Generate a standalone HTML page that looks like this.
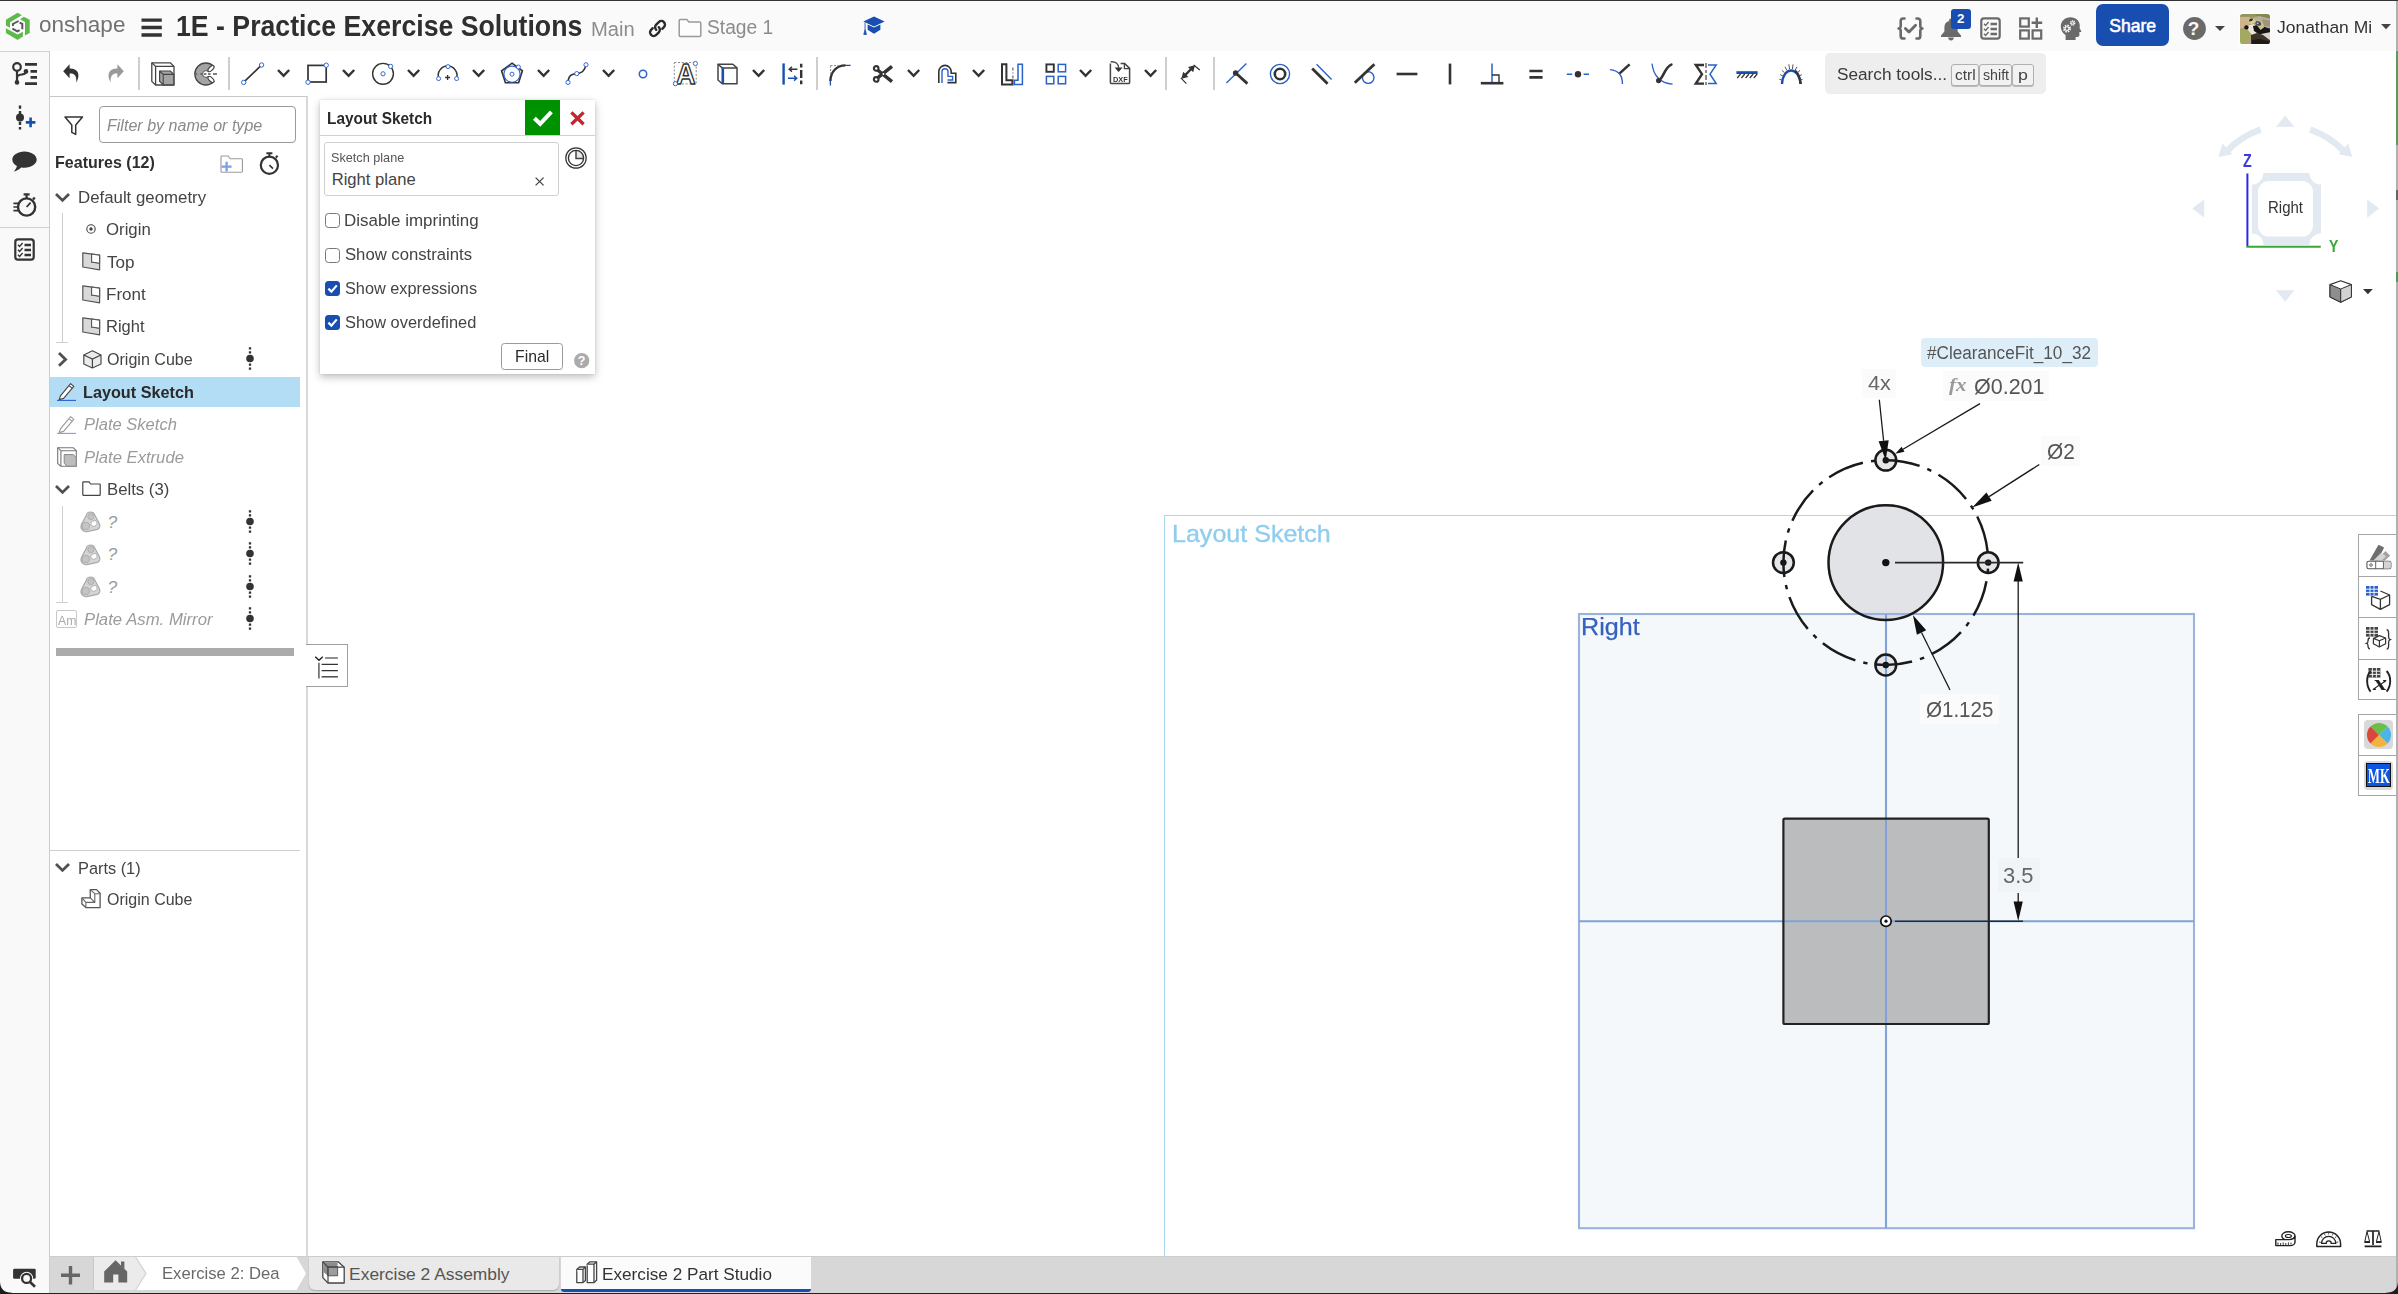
<!DOCTYPE html>
<html lang="en"><head><meta charset="utf-8"><title>1E - Practice Exercise Solutions | Exercise 2 Part Studio</title>
<style>
html,body{margin:0;padding:0;}
body{width:2398px;height:1294px;position:relative;overflow:hidden;background:#fff;font-family:"Liberation Sans",sans-serif;color:#333;}
.b{position:absolute;box-sizing:border-box;}
.t{position:absolute;white-space:nowrap;transform-origin:0 50%;}
svg{overflow:visible;}
</style></head><body>
<div class="b" style="left:0px;top:0px;width:2398px;height:51px;background:#fafafa;"></div>
<div class="b" style="left:0px;top:0px;width:2398px;height:1.2px;background:#333;"></div>
<div class="b" style="left:0px;top:51px;width:50px;height:1243px;background:#f9f9f9;border-right:1px solid #ccc;border-top:1px solid #d0d0d0;"></div>
<div class="b" style="left:50px;top:96px;width:258px;height:1161px;background:#fff;border-top:1px solid #c8c8c8;border-right:2px solid #d8d8d8;"></div>
<div class="b" style="left:50px;top:1256px;width:2348px;height:38px;background:#d7d7d7;"></div>
<div class="b" style="left:2396.4px;top:1px;width:1.6px;height:1293px;background:#b0b0b0;"></div>
<div class="b" style="left:2396.4px;top:51px;width:1.6px;height:94px;background:#5a9c5a;"></div>
<div class="b" style="left:2396.4px;top:190px;width:1.6px;height:10px;background:#666;"></div>
<div class="b" style="left:2396.4px;top:272px;width:1.6px;height:10px;background:#4aa04a;"></div>
<div class="b" style="left:0px;top:1292.6px;width:2398px;height:1.4px;background:#222;"></div>
<svg class="b" style="left:0px;top:1282px;" width="12" height="12" viewBox="0 0 12 12"><path d="M0,0 V12 H12 V10.8 C4,10.8 0.6,7 0,0z" fill="#1c1c1c"/></svg>
<svg class="b" style="left:2386px;top:1282px;" width="12" height="12" viewBox="0 0 12 12"><path d="M12,0 V12 H0 V10.8 C8,10.8 11.4,7 12,0z" fill="#1c1c1c"/></svg>
<svg class="b" style="left:0px;top:0px;" width="50" height="50" viewBox="0 0 50 50">
<path d="M5.9,19.7 L17.6,12.8 L21.9,15.3 L10,22.3 V27.7 L5.9,25.5z" fill="#5dba4a"/>
<path d="M20,19.3 L23.8,16.8 L29.7,19.7 V33 L25,35.4 V22.1z" fill="#5dba4a"/>
<path d="M5.9,28.3 L17.6,34.6 L22.9,31.7 V36.4 L17.6,39.9 L5.9,33z" fill="#5dba4a"/>
<g fill="none" stroke="#555" stroke-width="1.9"><path d="M18.6,21 L12.9,24 V26"/><path d="M19.6,22.6 L22.3,23.8 V29.2"/><path d="M12.4,28.6 L17.4,31.4 L19.6,30.2"/></g>
</svg>
<span class="t" style="left:38.6px;top:12px;font-size:22.2px;line-height:25px;color:#707070;transform:scaleX(1.0150);">onshape</span>
<svg class="b" style="left:141px;top:16px;" width="22" height="22" viewBox="0 0 22 22"><path d="M0.5,4.1 h20.3 M0.5,11.5 h20.3 M0.5,19 h20.3" stroke="#333" stroke-width="3.4"/></svg>
<span class="t" style="left:175.9px;top:10px;font-size:28.7px;line-height:32px;color:#2f2f2f;font-weight:700;transform:scaleX(0.9299);">1E - Practice Exercise Solutions</span>
<span class="t" style="left:591.4px;top:18px;font-size:19.6px;line-height:22px;color:#8c8c8c;transform:scaleX(1.0305);">Main</span>
<svg class="b" style="left:648px;top:19px;" width="19" height="19" viewBox="0 0 19 19"><g fill="none" stroke="#2b2b2b" stroke-width="2.4" stroke-linecap="round">
<path d="M8.2,10.8 a3.6,3.6 0 0 1 0,-5.1 l2.6,-2.6 a3.6,3.6 0 0 1 5.1,5.1 l-1.6,1.6"/>
<path d="M10.8,8.2 a3.6,3.6 0 0 1 0,5.1 l-2.6,2.6 a3.6,3.6 0 0 1 -5.1,-5.1 l1.6,-1.6"/></g></svg>
<svg class="b" style="left:678px;top:18px;" width="24" height="19" viewBox="0 0 24 19"><path d="M1.2,17.2 V2.6 a1.2,1.2 0 0 1 1.2,-1.2 h6.4 l2,2.6 h10.8 a1.2,1.2 0 0 1 1.2,1.2 v12 a1.2,1.2 0 0 1 -1.2,1.2 h-19.2 a1.2,1.2 0 0 1 -1.2,-1.2z" fill="#fdfdfd" stroke="#9a9a9a" stroke-width="1.5"/></svg>
<span class="t" style="left:706.6px;top:16px;font-size:19.6px;line-height:22px;color:#8c8c8c;transform:scaleX(0.9809);">Stage 1</span>
<svg class="b" style="left:863px;top:16px;" width="22" height="20" viewBox="0 0 22 20"><path d="M11,0.6 L21.6,5.6 L11,10.6 L0.4,5.6z" fill="#174eb0"/>
<path d="M4.6,8.6 v5.2 l6.4,4 l6.4,-4 v-5.2 l-6.4,3z" fill="#174eb0"/>
<path d="M2,6.5 v7 l-1.2,5 h2.6 l-1.2,-5" fill="#174eb0" stroke="#174eb0" stroke-width="0.8"/></svg>
<svg class="b" style="left:1897px;top:17px;" width="27" height="24" viewBox="0 0 27 24"><g fill="none" stroke="#6a6a6a" stroke-width="2.6" stroke-linecap="round" stroke-linejoin="round">
<path d="M7.5,1.5 h-1.2 a2.6,2.6 0 0 0 -2.6,2.6 v4.6 a2.4,2.4 0 0 1 -2.2,2.8 a2.4,2.4 0 0 1 2.2,2.8 v4.6 a2.6,2.6 0 0 0 2.6,2.6 h1.2"/>
<path d="M19.5,1.5 h1.2 a2.6,2.6 0 0 1 2.6,2.6 v4.6 a2.4,2.4 0 0 0 2.2,2.8 a2.4,2.4 0 0 0 -2.2,2.8 v4.6 a2.6,2.6 0 0 1 -2.6,2.6 h-1.2"/>
<path d="M8.4,11.4 l3.6,3.6 l6.6,-6.8" stroke-width="2.8"/></g></svg>
<svg class="b" style="left:1940px;top:18px;" width="22" height="22" viewBox="0 0 22 22"><path d="M11,0.5 a2,2 0 0 1 2,2 v0.6 a6.6,6.6 0 0 1 4.6,6.4 v4 l3.4,4 v1.4 h-20 v-1.4 l3.4,-4 v-4 a6.6,6.6 0 0 1 4.6,-6.4 v-0.6 a2,2 0 0 1 2,-2z M8.2,19.6 h5.6 a2.8,2.8 0 0 1 -5.6,0z" fill="#6a6a6a"/></svg>
<div class="b" style="left:1951px;top:9px;width:20px;height:20px;background:#174eb0;border-radius:3px;"></div>
<span class="t" style="left:1957.1px;top:11px;font-size:13.4px;line-height:15px;color:#fff;font-weight:700;">2</span>
<svg class="b" style="left:1980px;top:17px;" width="21" height="23" viewBox="0 0 21 23"><rect x="1.3" y="1.3" width="18.4" height="20.4" rx="2.6" fill="none" stroke="#6a6a6a" stroke-width="2.2"/>
<g stroke="#6a6a6a" stroke-width="2.4"><path d="M10.5,7 h6.5 M10.5,12 h6.5 M10.5,17 h6.5"/></g>
<g stroke="#6a6a6a" stroke-width="1.4" fill="none"><path d="M4,6.8 l1.6,1.6 l3,-3.4 M4,11.8 l1.6,1.6 l3,-3.4 M4,16.8 l1.6,1.6 l3,-3.4"/></g></svg>
<svg class="b" style="left:2019px;top:17px;" width="24" height="23" viewBox="0 0 24 23"><g fill="none" stroke="#6a6a6a" stroke-width="2.2"><rect x="1.2" y="1.4" width="8.6" height="8.2"/><rect x="1.2" y="13.4" width="8.6" height="8.2"/><rect x="13.6" y="13.4" width="8.6" height="8.2"/></g>
<path d="M17.8,0.4 v10.6 M12.6,5.7 h10.6" stroke="#6a6a6a" stroke-width="2.4"/></svg>
<svg class="b" style="left:2060px;top:17px;" width="22" height="23" viewBox="0 0 22 23"><path d="M10.4,0.2 c5.6,0 9.4,3.8 9.4,8.6 c0,0.8 -0.1,1.5 -0.3,2.2 l1.7,3 c0.3,0.6 0,1.1 -0.6,1.1 h-1.2 v3 c0,1.2 -0.8,2 -2,2 h-1.8 v2.9 h-10 v-5 c-3,-2 -4.8,-5 -4.8,-8.6 c0,-5.2 4,-9.2 9.6,-9.2z" fill="#6a6a6a"/>
<circle cx="7" cy="11.6" r="3.1" fill="none" stroke="#fafafa" stroke-width="1.8" stroke-dasharray="1.5 0.93"/><circle cx="7" cy="11.6" r="1.9" fill="none" stroke="#fafafa" stroke-width="1.1"/>
<circle cx="12.6" cy="6" r="2" fill="none" stroke="#fafafa" stroke-width="1.5" stroke-dasharray="1.1 0.47"/><circle cx="12.6" cy="6" r="1.1" fill="none" stroke="#fafafa" stroke-width="0.8"/></svg>
<div class="b" style="left:2096px;top:4px;width:73px;height:42px;background:#174eb0;border-radius:7px;"></div>
<span class="t" style="left:2109.2px;top:16px;font-size:17.6px;line-height:20px;color:#fff;-webkit-text-stroke:0.55px #fff;">Share</span>
<svg class="b" style="left:2183px;top:17px;" width="23" height="23" viewBox="0 0 23 23"><circle cx="11.5" cy="11.5" r="11.4" fill="#6a6a6a"/></svg>
<span class="t" style="left:2187.7px;top:18px;font-size:19px;line-height:21px;color:#fafafa;font-weight:700;">?</span>
<svg class="b" style="left:2215px;top:26px;" width="10" height="5" viewBox="0 0 10 5"><path d="M0,0 h10 l-5,5z" fill="#444"/></svg>
<div class="b" style="left:2239px;top:13px;width:32px;height:32px;background:#fff;border-radius:4px;"></div>
<svg class="b" style="left:2240px;top:14px;" width="30" height="30" viewBox="0 0 30 30"><defs><clipPath id="av"><rect width="30" height="30" rx="2.6"/></clipPath><filter id="avb" x="-10%" y="-10%" width="120%" height="120%"><feGaussianBlur stdDeviation="0.5"/></filter></defs>
<g clip-path="url(#av)"><g filter="url(#avb)"><rect x="-2" y="-2" width="34" height="34" fill="#a39c6c"/>
<rect x="-2" y="-2" width="34" height="4.4" fill="#8f965a"/><path d="M14,0 h17 v5 l-12,-2z" fill="#7d8a4c"/>
<path d="M0,3 h10 l-1,9 l-9,3z" fill="#cdb48e"/>
<path d="M-1,16 l9,-1 l4,6 l-1,10 h-12z" fill="#a2aa62"/>
<path d="M8,25 h4 v6 h-5z" fill="#b89a7c"/>
<path d="M13,4 l6,-2 l12,3 v9 l-14,-1z" fill="#b9ae9c"/>
<path d="M22,5 l9,2 v6 l-7,-1z" fill="#9e937f"/>
<path d="M9,11 l5,-1 l3,4 l-1,6 l-4,1 l-4,-5z" fill="#ebe5da"/>
<path d="M13,12 l5,-1 l13,4 v6 l-12,-1 l-5,-3z" fill="#141414"/>
<path d="M21,20 l10,-2 v9 l-8,0z" fill="#d9d3ca"/>
<path d="M11,21 l6,-2 l6,2 l8,6 v5 h-20z" fill="#3b322c"/>
<path d="M12,26 l8,-1 l11,3 v4 h-19z" fill="#1b1a19"/>
<path d="M8.5,6.5 l3,-2.2 l3.4,1.2 l0.6,3 l-4,1.8 l-2.6,-1z" fill="#d9cd98"/>
<path d="M14.5,7 l4,-1 l4.5,3 l1,4.5 l-3.5,2.5 l-3,-4z" fill="#d3c07e"/>
<ellipse cx="11" cy="6" rx="2.1" ry="1.2" transform="rotate(-25 11 6)" fill="#2c2b32"/>
<ellipse cx="18.3" cy="9.4" rx="3" ry="2" transform="rotate(25 18.3 9.4)" fill="#3f4a5c"/>
<ellipse cx="17.6" cy="9.2" rx="1" ry="0.7" fill="#c9d3de"/>
<circle cx="6.4" cy="13.4" r="2.1" fill="#121212"/>
</g></g></svg>
<span class="t" style="left:2277.3px;top:17px;font-size:17.2px;line-height:20px;color:#333;transform:scaleX(1.0154);">Jonathan Mi</span>
<svg class="b" style="left:2380.7px;top:23.8px;" width="10" height="5.2" viewBox="0 0 10 5.2"><path d="M0,0 h10 l-5,5.2z" fill="#444"/></svg>
<svg class="b" style="left:12px;top:62px;" width="26" height="23" viewBox="0 0 26 23"><g stroke="#333" stroke-width="2.6" fill="none"><path d="M13,2.4 h12 M18.5,9.4 h6.5 M18.5,15.4 h6.5 M13,21.6 h12"/></g>
<circle cx="5" cy="5" r="3.8" fill="none" stroke="#333" stroke-width="2.2"/>
<path d="M5,9 V20 M5,15.5 c0,-2 2,-2.5 5,-3 c2.5,-0.4 4,-1.5 4,-3" fill="none" stroke="#333" stroke-width="2.2"/>
<circle cx="5" cy="20.4" r="2.3" fill="#333"/><circle cx="14" cy="9.4" r="2.3" fill="#333"/></svg>
<svg class="b" style="left:62.5px;top:63.5px;" width="17" height="19" viewBox="0 0 17 19"><path d="M6.6,0.2 L0.2,7.2 L6.6,14.2 V9.6 C11.5,9.2 13.6,11.6 13.4,18.6 C17.4,11 15.8,4.4 6.6,4.6z" fill="#333"/></svg>
<svg class="b" style="left:107px;top:63.5px;" width="17" height="19" viewBox="0 0 17 19"><path d="M10.4,0.2 L16.8,7.2 L10.4,14.2 V9.6 C5.5,9.2 3.4,11.6 3.6,18.6 C-0.4,11 1.2,4.4 10.4,4.6z" fill="#9a9a9a"/></svg>
<div class="b" style="left:138px;top:57px;width:2px;height:33px;background:#cfcfcf;"></div>
<svg class="b" style="left:150.5px;top:61.5px;" width="24" height="24" viewBox="0 0 24 24"><g fill="none" stroke="#444" stroke-width="1.3" stroke-linejoin="round"><path d="M0.8,0.8 h18.4 l3.8,3.6 v18.6 h-18.4 l-3.8,-3.6z"/><path d="M0.8,0.8 l3.8,3.6 h18.4 M4.6,4.4 v18.6"/></g>
<path d="M8.6,9 h10.6 l3.6,3.4 v10.4 h-10.6 l-3.6,-3.4z" fill="#a4a4a4" stroke="#444" stroke-width="1.2" stroke-linejoin="round"/><path d="M8.6,9 l3.6,3.4 h10.6 M12.2,12.4 v10.4" fill="none" stroke="#444" stroke-width="1.1"/></svg>
<svg class="b" style="left:194.0px;top:61.5px;" width="24" height="24" viewBox="0 0 24 24"><path d="M12,12 L19.6,4.2 A11,11 0 1 0 19.6,19.8z" fill="#a4a4a4" stroke="#444" stroke-width="1.3"/>
<path d="M8.6,12 a3.4,3.4 0 0 1 6.8,0 a3.4,3.4 0 0 1 -6.8,0" fill="#fff" stroke="#444" stroke-width="0.9"/><path d="M12,12 L18.6,5.6 L18.6,18.4z" fill="#fff"/>
<ellipse cx="17" cy="6.6" rx="3.8" ry="1.9" transform="rotate(-45 17 6.6)" fill="#fff" stroke="#444" stroke-width="1.2"/>
<ellipse cx="17" cy="17.4" rx="3.8" ry="1.9" transform="rotate(45 17 17.4)" fill="#fff" stroke="#444" stroke-width="1.2"/>
<path d="M2,12 h1.2 M6.4,12 h2 M10,12 h2.4 M14,12 h2.6 M19,12 h4" stroke="#555" stroke-width="1.3"/></svg>
<div class="b" style="left:228px;top:57px;width:2px;height:33px;background:#cfcfcf;"></div>
<svg class="b" style="left:240.5px;top:61.5px;" width="24" height="24" viewBox="0 0 24 24"><path d="M2.8,20.2 L20.4,3.2" stroke="#333" stroke-width="1.7"/><circle cx="2.7" cy="20.4" r="2.2" fill="#fff" stroke="#2a62c9" stroke-width="0.95"/><circle cx="20.6" cy="3" r="2.2" fill="#fff" stroke="#2a62c9" stroke-width="0.95"/></svg>
<svg class="b" style="left:278.4px;top:70.39999999999999px;" width="11.2" height="5.8" viewBox="0 0 11.2 5.8"><path d="M0,0 L5.6,5.8 L11.2,0" fill="none" stroke="#333" stroke-width="2.5"/></svg>
<svg class="b" style="left:305.0px;top:61.5px;" width="24" height="24" viewBox="0 0 24 24"><rect x="3" y="3.4" width="18.2" height="16.6" fill="none" stroke="#333" stroke-width="1.7"/><circle cx="3" cy="20.2" r="2.2" fill="#fff" stroke="#2a62c9" stroke-width="0.95"/><circle cx="21.2" cy="3.2" r="2.2" fill="#fff" stroke="#2a62c9" stroke-width="0.95"/></svg>
<svg class="b" style="left:343.4px;top:70.39999999999999px;" width="11.2" height="5.8" viewBox="0 0 11.2 5.8"><path d="M0,0 L5.6,5.8 L11.2,0" fill="none" stroke="#333" stroke-width="2.5"/></svg>
<svg class="b" style="left:370.5px;top:61.5px;" width="24" height="24" viewBox="0 0 24 24"><circle cx="12" cy="11.8" r="10.4" fill="none" stroke="#333" stroke-width="1.4"/><circle cx="12" cy="11.8" r="2.1" fill="#fff" stroke="#2a62c9" stroke-width="0.95"/><circle cx="19.6" cy="4.4" r="2.1" fill="#fff" stroke="#2a62c9" stroke-width="0.95"/></svg>
<svg class="b" style="left:408.4px;top:70.39999999999999px;" width="11.2" height="5.8" viewBox="0 0 11.2 5.8"><path d="M0,0 L5.6,5.8 L11.2,0" fill="none" stroke="#333" stroke-width="2.5"/></svg>
<svg class="b" style="left:435.5px;top:61.5px;" width="24" height="24" viewBox="0 0 24 24"><path d="M2.6,16.2 A9.4,9.4 0 1 1 20.6,16.2" fill="none" stroke="#333" stroke-width="1.5"/><circle cx="2.6" cy="16.6" r="2" fill="#fff" stroke="#2a62c9" stroke-width="0.95"/><circle cx="20.6" cy="16.6" r="2" fill="#fff" stroke="#2a62c9" stroke-width="0.95"/><circle cx="12" cy="4.6" r="2" fill="#fff" stroke="#2a62c9" stroke-width="0.95"/><path d="M11.6,13 v5 M9.1,15.5 h5" stroke="#333" stroke-width="1.3"/></svg>
<svg class="b" style="left:473.0px;top:70.39999999999999px;" width="11.2" height="5.8" viewBox="0 0 11.2 5.8"><path d="M0,0 L5.6,5.8 L11.2,0" fill="none" stroke="#333" stroke-width="2.5"/></svg>
<svg class="b" style="left:500.4px;top:61.5px;" width="24" height="24" viewBox="0 0 24 24"><path d="M12,1.2 L22.4,8.8 L18.6,20.8 H5.4 L1.6,8.8z" fill="none" stroke="#333" stroke-width="1.6"/><circle cx="12" cy="12.2" r="8.1" fill="none" stroke="#2a62c9" stroke-width="1.1"/><circle cx="12" cy="12.2" r="2" fill="#fff" stroke="#2a62c9" stroke-width="0.95"/><circle cx="18.4" cy="5" r="2" fill="#fff" stroke="#2a62c9" stroke-width="0.95"/></svg>
<svg class="b" style="left:538.4px;top:70.39999999999999px;" width="11.2" height="5.8" viewBox="0 0 11.2 5.8"><path d="M0,0 L5.6,5.8 L11.2,0" fill="none" stroke="#333" stroke-width="2.5"/></svg>
<svg class="b" style="left:565.3px;top:61.5px;" width="24" height="24" viewBox="0 0 24 24"><path d="M3,20.4 C3.4,13 7,12 11.6,11.6 C16,11.2 20,8.8 20.8,3" fill="none" stroke="#333" stroke-width="1.6"/><circle cx="3" cy="20.4" r="2.1" fill="#fff" stroke="#2a62c9" stroke-width="0.95"/><circle cx="11.8" cy="11.6" r="2.1" fill="#fff" stroke="#2a62c9" stroke-width="0.95"/><circle cx="21" cy="2.8" r="2.1" fill="#fff" stroke="#2a62c9" stroke-width="0.95"/></svg>
<svg class="b" style="left:603.4px;top:70.39999999999999px;" width="11.2" height="5.8" viewBox="0 0 11.2 5.8"><path d="M0,0 L5.6,5.8 L11.2,0" fill="none" stroke="#333" stroke-width="2.5"/></svg>
<svg class="b" style="left:630.5px;top:61.5px;" width="24" height="24" viewBox="0 0 24 24"><circle cx="12" cy="12" r="3.7" fill="none" stroke="#2a62c9" stroke-width="1.5"/></svg>
<svg class="b" style="left:670px;top:58px;" width="32" height="32" viewBox="0 0 32 32"><rect x="4.3" y="4.5" width="21.9" height="21.4" fill="none" stroke="#8a8a8a" stroke-width="1" stroke-dasharray="2 1.7"/><text x="15.7" y="25.6" text-anchor="middle" font-family="Liberation Sans, sans-serif" font-weight="700" font-size="28.6" fill="#fff" stroke="#333" stroke-width="1.4" stroke-linejoin="round" textLength="19.6" lengthAdjust="spacingAndGlyphs">A</text><circle cx="25.4" cy="5.5" r="2.1" fill="#fff" stroke="#2a62c9" stroke-width="0.95"/><circle cx="5.4" cy="25.7" r="2.1" fill="#fff" stroke="#2a62c9" stroke-width="0.95"/></svg>
<svg class="b" style="left:715.5px;top:61.5px;" width="24" height="24" viewBox="0 0 24 24"><g fill="none" stroke="#444" stroke-width="1.5" stroke-linejoin="round"><path d="M2,2.2 h14.8 l4.2,3.7 v15.8 h-14.8 l-4.2,-3.7z"/><path d="M2,2.2 l4.2,3.7 h14.8"/></g><path d="M6.8,5.9 v15.8" stroke="#174eb0" stroke-width="2.6"/></svg>
<svg class="b" style="left:753.4px;top:70.39999999999999px;" width="11.2" height="5.8" viewBox="0 0 11.2 5.8"><path d="M0,0 L5.6,5.8 L11.2,0" fill="none" stroke="#333" stroke-width="2.5"/></svg>
<svg class="b" style="left:780.0px;top:61.5px;" width="24" height="24" viewBox="0 0 24 24"><path d="M3.6,1.4 v21.2" stroke="#174eb0" stroke-width="2.4"/><path d="M21.2,1.8 v20.6" stroke="#333" stroke-width="2.4" stroke-dasharray="3.6 2.6 8 2.6 3.6"/>
<path d="M17.4,7.2 h-8 m2.6,-2.4 l-2.8,2.4 l2.8,2.4" fill="none" stroke="#333" stroke-width="1.4"/><path d="M8,16.2 h8.6 m-2.6,-2.4 l2.8,2.4 l-2.8,2.4" fill="none" stroke="#174eb0" stroke-width="1.4"/></svg>
<div class="b" style="left:815.5px;top:57px;width:2px;height:33px;background:#cfcfcf;"></div>
<svg class="b" style="left:828.3px;top:61.5px;" width="24" height="24" viewBox="0 0 24 24"><path d="M2.6,3.6 h8 M2.6,3.6 v8" stroke="#888" stroke-width="1" stroke-dasharray="2 1.4" fill="none"/><path d="M2.4,19 C2.6,9.6 8.6,3.6 17.4,3.4" fill="none" stroke="#333" stroke-width="2.4"/><path d="M17,3.4 h5.6 M2.4,18.6 v4.8" stroke="#174eb0" stroke-width="1.3"/></svg>
<svg class="b" style="left:870.6px;top:61.5px;" width="24" height="24" viewBox="0 0 24 24"><g fill="none" stroke="#333" stroke-width="2.1"><circle cx="5.2" cy="6.4" r="2.3"/><circle cx="5.2" cy="17.4" r="2.3"/></g><path d="M6.6,8 L21,19.6 M6.6,15.8 L21,4.4" stroke="#333" stroke-width="3.5" stroke-linecap="butt"/><circle cx="12.4" cy="12" r="0.9" fill="#fff"/></svg>
<svg class="b" style="left:908.3px;top:70.39999999999999px;" width="11.2" height="5.8" viewBox="0 0 11.2 5.8"><path d="M0,0 L5.6,5.8 L11.2,0" fill="none" stroke="#333" stroke-width="2.5"/></svg>
<svg class="b" style="left:935.3px;top:61.5px;" width="24" height="24" viewBox="0 0 24 24"><path d="M3.8,21 V9.6 a6.2,6.2 0 0 1 12.4,0 v1.6 h4.6 v9.4 h-8.4" fill="none" stroke="#333" stroke-width="1.6"/><path d="M7,21 V9.8 a3,3 0 0 1 6,0 v4.6 h4.6 v3.6 h-5" fill="none" stroke="#2a62c9" stroke-width="1.4"/></svg>
<svg class="b" style="left:973.1999999999999px;top:70.39999999999999px;" width="11.2" height="5.8" viewBox="0 0 11.2 5.8"><path d="M0,0 L5.6,5.8 L11.2,0" fill="none" stroke="#333" stroke-width="2.5"/></svg>
<svg class="b" style="left:1000.4px;top:61.5px;" width="24" height="24" viewBox="0 0 24 24"><path d="M2,2.2 h4.4 v16 h6 v4.2 h-10.4z" fill="none" stroke="#333" stroke-width="2"/><path d="M22.4,2.2 h-4.4 v16 h-3.6 v4.2 h8z" fill="none" stroke="#2a62c9" stroke-width="1.5"/><path d="M12.9,5.6 v17.6" stroke="#555" stroke-width="1.1" stroke-dasharray="3 2 1 2"/></svg>
<svg class="b" style="left:1043.6px;top:61.5px;" width="24" height="24" viewBox="0 0 24 24"><rect x="2.4" y="2.4" width="7.4" height="7.4" fill="none" stroke="#333" stroke-width="1.9"/><g fill="none" stroke="#2a62c9" stroke-width="1.5"><rect x="14.2" y="2.4" width="7.4" height="7.4"/><rect x="2.4" y="14.4" width="7.4" height="7.4"/><rect x="14.2" y="14.4" width="7.4" height="7.4"/></g></svg>
<svg class="b" style="left:1080.2px;top:70.39999999999999px;" width="11.2" height="5.8" viewBox="0 0 11.2 5.8"><path d="M0,0 L5.6,5.8 L11.2,0" fill="none" stroke="#333" stroke-width="2.5"/></svg>
<svg class="b" style="left:1108.3px;top:60.2px;" width="24" height="24" viewBox="0 0 24 24"><path d="M2.4,3.6 V22.6 a0.8,0.8 0 0 0 0.8,0.8 h17.6 a0.8,0.8 0 0 0 0.8,-0.8 V8.4 l-5,-5 h-4" fill="none" stroke="#444" stroke-width="1.5"/><path d="M16.4,3.4 v5.2 h5.2" fill="none" stroke="#444" stroke-width="1.3"/>
<path d="M2.6,1.8 c5.4,-0.4 8,2 8,6" fill="none" stroke="#444" stroke-width="1.3"/><path d="M6.6,7.6 h8 l-4,4.4z" fill="#333"/></svg>
<span class="t" style="left:1113.1px;top:75px;font-size:7.4px;line-height:9px;color:#333;font-weight:700;transform:scaleX(0.9957);">DXF</span>
<svg class="b" style="left:1145.3000000000002px;top:70.39999999999999px;" width="11.2" height="5.8" viewBox="0 0 11.2 5.8"><path d="M0,0 L5.6,5.8 L11.2,0" fill="none" stroke="#333" stroke-width="2.5"/></svg>
<div class="b" style="left:1165.3px;top:57px;width:2px;height:33px;background:#cfcfcf;"></div>
<svg class="b" style="left:1178.3px;top:61.5px;" width="24" height="24" viewBox="0 0 24 24"><path d="M6.6,13.6 L13.8,6.4" stroke="#333" stroke-width="2.2"/><path d="M3.4,16.8 l1.8,-7 l5.2,5.2z M17,3.2 l-1.8,7 l-5.2,-5.2z" fill="#333"/><path d="M15.7,3 L21.8,8 M2.8,15.8 L8.4,21.6" stroke="#333" stroke-width="1.2"/></svg>
<div class="b" style="left:1213px;top:57px;width:2px;height:33px;background:#cfcfcf;"></div>
<svg class="b" style="left:1225.0px;top:61.5px;" width="24" height="24" viewBox="0 0 24 24"><path d="M1.4,21 L21.4,1.4" stroke="#2a62c9" stroke-width="1.4"/><path d="M11,11.2 L22.4,21.6" stroke="#333" stroke-width="2.8"/><circle cx="10.6" cy="11" r="2.7" fill="#333"/></svg>
<svg class="b" style="left:1268.3px;top:61.5px;" width="24" height="24" viewBox="0 0 24 24"><circle cx="12" cy="12" r="9.6" fill="none" stroke="#2a62c9" stroke-width="1.4"/><circle cx="12" cy="12" r="5.2" fill="none" stroke="#333" stroke-width="2.6"/></svg>
<svg class="b" style="left:1310.0px;top:61.5px;" width="24" height="24" viewBox="0 0 24 24"><path d="M6.6,2.2 L21.6,17.6" stroke="#2a62c9" stroke-width="1.4"/><path d="M2.2,6.6 L17.6,21.8" stroke="#333" stroke-width="2.8"/></svg>
<svg class="b" style="left:1353.0px;top:61.5px;" width="24" height="24" viewBox="0 0 24 24"><circle cx="15.2" cy="15.6" r="5.8" fill="none" stroke="#2a62c9" stroke-width="1.4"/><path d="M1.8,20.8 L21.4,2.2" stroke="#333" stroke-width="2.8"/></svg>
<svg class="b" style="left:1395.4px;top:61.5px;" width="24" height="24" viewBox="0 0 24 24"><path d="M1.6,12 h20.8" stroke="#333" stroke-width="2.6"/></svg>
<svg class="b" style="left:1438.0px;top:61.5px;" width="24" height="24" viewBox="0 0 24 24"><path d="M12,1.6 v20.8" stroke="#333" stroke-width="2.6"/></svg>
<svg class="b" style="left:1480.0px;top:61.5px;" width="24" height="24" viewBox="0 0 24 24"><path d="M12,1.6 v19" stroke="#2a62c9" stroke-width="1.5"/><path d="M12,13 h7 v7.6" fill="none" stroke="#333" stroke-width="1.4"/><path d="M0.8,21.2 h22.6" stroke="#333" stroke-width="2.6"/></svg>
<svg class="b" style="left:1523.5px;top:61.5px;" width="24" height="24" viewBox="0 0 24 24"><path d="M5.4,9 h13.2 M5.4,15.4 h13.2" stroke="#333" stroke-width="2.6"/></svg>
<svg class="b" style="left:1565.6px;top:61.5px;" width="24" height="24" viewBox="0 0 24 24"><path d="M0.8,12.2 h5.4 M17.6,12.2 h5.4" stroke="#2a62c9" stroke-width="1.5"/><circle cx="12" cy="12.2" r="3.2" fill="#333"/></svg>
<svg class="b" style="left:1608.3px;top:61.5px;" width="24" height="24" viewBox="0 0 24 24"><path d="M2,7.6 C10,8.4 14.6,13.4 14.4,22" fill="none" stroke="#2a62c9" stroke-width="1.4"/><path d="M11.6,11.4 L21.6,2.4" stroke="#333" stroke-width="2.6"/></svg>
<svg class="b" style="left:1650.3px;top:61.5px;" width="24" height="24" viewBox="0 0 24 24"><path d="M2,1.6 C3.4,13 10,21 22.6,22.2" fill="none" stroke="#2a62c9" stroke-width="1.3"/><path d="M8.8,18.4 C13.4,16.4 14.4,5.4 21.4,2.6" fill="none" stroke="#333" stroke-width="2.6" stroke-linecap="round"/><circle cx="8.6" cy="18.6" r="2.6" fill="#333"/></svg>
<svg class="b" style="left:1693.5px;top:61.5px;" width="24" height="24" viewBox="0 0 24 24"><path d="M10,3 H1.8 L8,12.2 L1.8,21.6 H10" fill="none" stroke="#333" stroke-width="2.4"/><path d="M14,3 H22.2 L16,12.2 L22.2,21.6 H14" fill="none" stroke="#2a62c9" stroke-width="1.5"/><path d="M12,1 v22.4" stroke="#444" stroke-width="1.2" stroke-dasharray="5 2 3 2"/></svg>
<svg class="b" style="left:1735.3px;top:61.5px;" width="24" height="24" viewBox="0 0 24 24"><path d="M1.4,10.6 h21.2" stroke="#174eb0" stroke-width="2.8"/><path d="M5.6,12 l-3.4,4 M9.8,12 l-3.4,4 M14,12 l-3.4,4 M18.2,12 l-3.4,4 M22.2,12 l-3.4,4" stroke="#333" stroke-width="1.2"/></svg>
<svg class="b" style="left:1778.5px;top:61.5px;" width="24" height="24" viewBox="0 0 24 24"><path d="M3,22 C4,4 20,4 21.6,22" fill="none" stroke="#174eb0" stroke-width="2.4"/><path d="M21.6,22 C21,15 19,11 16,8.6" fill="none" stroke="#333" stroke-width="2.4"/><g stroke="#555" stroke-width="1"><path d="M2.8,18 l-2.4,-0.6 M3.8,14 l-2.6,-1.4 M5.4,10.6 l-2.4,-2.2 M7.8,8.2 l-1.8,-3.4 M10.6,7 l-0.8,-4.6 M13.4,7 l0.6,-4.6 M16.2,8.2 l1.8,-3.4 M18.6,10.6 l2.4,-2.2 M20.2,14 l2.6,-1.4 M21.2,18 l2.4,-0.6"/></g></svg>
<div class="b" style="left:1825px;top:53px;width:221px;height:41px;background:#eeeeee;border-radius:5px;"></div>
<span class="t" style="left:1837.2px;top:64px;font-size:17.4px;line-height:20px;color:#3a3a3a;transform:scaleX(0.9896);">Search tools...</span>
<div class="b" style="left:1951px;top:64.4px;width:27.799999999999955px;height:21.8px;background:#f2f2f2;border:1px solid #b0b0b0;border-radius:3px;box-shadow:0 1px 0 #bbb;"></div>
<span class="t" style="left:1954.9px;top:66px;font-size:15.4px;line-height:17px;color:#444;transform:scaleX(1.0072);">ctrl</span>
<div class="b" style="left:1979.2px;top:64.4px;width:32.59999999999991px;height:21.8px;background:#f2f2f2;border:1px solid #b0b0b0;border-radius:3px;box-shadow:0 1px 0 #bbb;"></div>
<span class="t" style="left:1982.6px;top:66px;font-size:15.4px;line-height:17px;color:#444;transform:scaleX(0.9225);">shift</span>
<div class="b" style="left:2012.2px;top:64.4px;width:21.799999999999955px;height:21.8px;background:#f2f2f2;border:1px solid #b0b0b0;border-radius:3px;box-shadow:0 1px 0 #bbb;"></div>
<span class="t" style="left:2018.3px;top:66px;font-size:15.4px;line-height:17px;color:#444;transform:scaleX(1.1544);">p</span>
<svg class="b" style="left:15px;top:105px;" width="22" height="25" viewBox="0 0 22 25"><path d="M5,0.5 v24" stroke="#333" stroke-width="2.4" stroke-dasharray="3.2 2.2"/><circle cx="5" cy="12.5" r="4" fill="#333"/><path d="M15.6,12.6 v9.6 M10.8,17.4 h9.6" stroke="#174eb0" stroke-width="2.6"/></svg>
<svg class="b" style="left:12px;top:151px;" width="25" height="21" viewBox="0 0 25 21"><path d="M12.5,0.4 c6.8,0 12.2,3.6 12.2,8.2 c0,4.6 -5.4,8.2 -12.2,8.2 c-1.2,0 -2.4,-0.1 -3.4,-0.3 c-2,2 -4.4,3.4 -7.4,4 c1.8,-1.6 2.8,-3.4 3.2,-5.4 c-2.8,-1.6 -4.6,-3.8 -4.6,-6.5 c0,-4.6 5.4,-8.2 12.2,-8.2z" fill="#333"/></svg>
<svg class="b" style="left:13px;top:193px;" width="24" height="24" viewBox="0 0 24 24"><circle cx="13.6" cy="14" r="8.6" fill="none" stroke="#333" stroke-width="2.4"/><path d="M10.6,1.4 h6 M13.6,1.4 v4 M20,6.4 l1.8,-1.8" stroke="#333" stroke-width="2.2"/><path d="M13.6,14 l4,-4.4" stroke="#333" stroke-width="1.8"/><path d="M0.4,10.4 h5 M0.4,14 h4 M0.4,17.6 h5" stroke="#333" stroke-width="1.6"/></svg>
<div class="b" style="left:0px;top:227px;width:49px;height:1.4px;background:#d0d0d0;"></div>
<svg class="b" style="left:14px;top:238px;" width="21" height="23" viewBox="0 0 21 23"><rect x="1.3" y="1.3" width="18.4" height="20.4" rx="2.6" fill="none" stroke="#333" stroke-width="2.2"/>
<g stroke="#333" stroke-width="2.4"><path d="M10.5,7 h6.5 M10.5,12 h6.5 M10.5,17 h6.5"/></g>
<g stroke="#333" stroke-width="1.4" fill="none"><path d="M4,6.8 l1.6,1.6 l3,-3.4 M4,11.8 l1.6,1.6 l3,-3.4 M4,16.8 l1.6,1.6 l3,-3.4"/></g></svg>
<svg class="b" style="left:0px;top:1250px;" width="50" height="44" viewBox="0 0 50 44"><rect x="13.1" y="18.8" width="22.6" height="10" rx="1.4" fill="#333"/><circle cx="26.6" cy="28.4" r="6.6" fill="#f9f9f9"/><circle cx="26.6" cy="28.4" r="4.5" fill="#f9f9f9" stroke="#333" stroke-width="2.3"/><path d="M29.8,31.8 L35,36.8" stroke="#333" stroke-width="2.6"/></svg>
<svg class="b" style="left:63.5px;top:116px;" width="19.5" height="19.5" viewBox="0 0 19.5 19.5"><path d="M1,1 h17.5 l-6.8,8 v9.4 l-3.9,-2 v-7.4z" fill="none" stroke="#333" stroke-width="1.5" stroke-linejoin="round"/></svg>
<div class="b" style="left:99.4px;top:106.3px;width:196.6px;height:36.6px;border:1px solid #9a9a9a;border-radius:4px;background:#fff;"></div>
<span class="t" style="left:106.8px;top:115px;font-size:17.4px;line-height:20px;color:#8a8a8a;font-style:italic;transform:scaleX(0.9232);">Filter by name or type</span>
<span class="t" style="left:54.8px;top:153px;font-size:16.6px;line-height:19px;color:#2f2f2f;font-weight:700;transform:scaleX(0.9662);">Features (12)</span>
<svg class="b" style="left:220px;top:154.5px;" width="23.5" height="18" viewBox="0 0 23.5 18"><path d="M1,16.6 V1.8 a0.8,0.8 0 0 1 0.8,-0.8 h6.4 l2,2.8 h11.4 a0.8,0.8 0 0 1 0.8,0.8 v11.8 a0.8,0.8 0 0 1 -0.8,0.8 h-19.8z" fill="#fff" stroke="#9a9a9a" stroke-width="1.1"/><path d="M6.6,6.8 v9.8 M1.6,11.7 h10" stroke="#7f9fe0" stroke-width="2.3"/></svg>
<svg class="b" style="left:258.5px;top:151.5px;" width="21" height="23" viewBox="0 0 21 23"><circle cx="10.4" cy="13.2" r="8.6" fill="none" stroke="#333" stroke-width="2.2"/><path d="M7.4,1.2 h6 M10.4,1.2 v3.4 M16.8,5.6 l1.8,-1.8" stroke="#333" stroke-width="2"/><path d="M10.4,13.2 l3.6,3.4" stroke="#333" stroke-width="1.6"/></svg>
<svg class="b" style="left:55.2px;top:193px;" width="15" height="8.8" viewBox="0 0 15 8.8"><path d="M1,1 L7.5,7.4 L14,1" fill="none" stroke="#505050" stroke-width="2.8"/></svg>
<span class="t" style="left:77.9px;top:187px;font-size:17.4px;line-height:20px;color:#444;transform:scaleX(0.9671);">Default geometry</span>
<div class="b" style="left:61.5px;top:213.4px;width:1.3px;height:129px;background:#cdcdcd;"></div>
<div class="b" style="left:56.3px;top:341.6px;width:11.6px;height:1.2px;background:#cfcfcf;"></div>
<svg class="b" style="left:85.5px;top:224px;" width="10" height="10" viewBox="0 0 10 10"><circle cx="5" cy="5" r="4.2" fill="none" stroke="#444" stroke-width="1.1"/><circle cx="5" cy="5" r="1.7" fill="#444"/></svg>
<span class="t" style="left:106.0px;top:219px;font-size:17.4px;line-height:20px;color:#444;transform:scaleX(0.9650);">Origin</span>
<svg class="b" style="left:81.8px;top:252.4px;" width="18.5" height="18.5" viewBox="0 0 18.5 18.5"><path d="M0.8,0.8 L17.6,3.2 V17.8 L0.8,15z" fill="#d9d9d9" stroke="#555" stroke-width="1.2" stroke-linejoin="round"/><path d="M9.6,2 V10 L17.6,11.2" fill="none" stroke="#555" stroke-width="1.1"/><path d="M9.6,2 L17.6,3.2 V11.2 L9.6,10z" fill="#fff" stroke="#555" stroke-width="1.1"/></svg>
<span class="t" style="left:106.9px;top:252px;font-size:17.4px;line-height:20px;color:#444;transform:scaleX(0.9826);">Top</span>
<svg class="b" style="left:81.8px;top:284.8px;" width="18.5" height="18.5" viewBox="0 0 18.5 18.5"><path d="M0.8,0.8 L17.6,3.2 V17.8 L0.8,15z" fill="#d9d9d9" stroke="#555" stroke-width="1.2" stroke-linejoin="round"/><path d="M9.6,2 V10 L17.6,11.2" fill="none" stroke="#555" stroke-width="1.1"/><path d="M9.6,2 L17.6,3.2 V11.2 L9.6,10z" fill="#fff" stroke="#555" stroke-width="1.1"/></svg>
<span class="t" style="left:106.0px;top:284px;font-size:17.4px;line-height:20px;color:#444;transform:scaleX(0.9779);">Front</span>
<svg class="b" style="left:81.8px;top:317.4px;" width="18.5" height="18.5" viewBox="0 0 18.5 18.5"><path d="M0.8,0.8 L17.6,3.2 V17.8 L0.8,15z" fill="#d9d9d9" stroke="#555" stroke-width="1.2" stroke-linejoin="round"/><path d="M9.6,2 V10 L17.6,11.2" fill="none" stroke="#555" stroke-width="1.1"/><path d="M9.6,2 L17.6,3.2 V11.2 L9.6,10z" fill="#fff" stroke="#555" stroke-width="1.1"/></svg>
<span class="t" style="left:106.1px;top:316px;font-size:17.4px;line-height:20px;color:#444;transform:scaleX(0.9472);">Right</span>
<svg class="b" style="left:58.2px;top:352.3px;" width="9" height="14.8" viewBox="0 0 9 14.8"><path d="M1,1 L7.6,7.4 L1,13.8" fill="none" stroke="#505050" stroke-width="2.8"/></svg>
<svg class="b" style="left:82.5px;top:349.8px;" width="18.8" height="18.8" viewBox="0 0 18.8 18.8"><path d="M9.4,0.8 L18,5 V14 L9.4,18 L0.8,14 V5z" fill="#ececec" stroke="#4a4a4a" stroke-width="1.2" stroke-linejoin="round"/><path d="M0.8,5 L9.4,9 L18,5 M9.4,9 V18" fill="none" stroke="#444" stroke-width="1.2"/></svg>
<span class="t" style="left:107.3px;top:349px;font-size:17.4px;line-height:20px;color:#444;transform:scaleX(0.9237);">Origin Cube</span>
<svg class="b" style="left:246.4px;top:347.2px;" width="8" height="23" viewBox="0 0 8 23"><path d="M4,0.2 v22.6" stroke="#333" stroke-width="2.3" stroke-dasharray="2.3 1.75"/><circle cx="4" cy="11.5" r="3.8" fill="#333"/></svg>
<div class="b" style="left:49.8px;top:377px;width:250.4px;height:30px;background:#b3dcf5;"></div>
<svg class="b" style="left:57.2px;top:382.4px;" width="19" height="19" viewBox="0 0 19 19"><path d="M3.4,13.8 L13.6,1.6 L16.8,4.4 L6.6,16.4 L2.2,17.6z M12,3.6 L15,6.2" fill="#fff" stroke="#444" stroke-width="1.1" stroke-linejoin="round"/><path d="M0,18.4 h19" stroke="#2a62c9" stroke-width="1.1"/></svg>
<span class="t" style="left:82.5px;top:383px;font-size:16.4px;line-height:18px;color:#2a2a2a;font-weight:700;transform:scaleX(0.9896);">Layout Sketch</span>
<svg class="b" style="left:57.2px;top:414.8px;" width="19" height="19" viewBox="0 0 19 19"><path d="M3.4,13.8 L13.6,1.6 L16.8,4.4 L6.6,16.4 L2.2,17.6z M12,3.6 L15,6.2" fill="#fff" stroke="#999" stroke-width="1.1" stroke-linejoin="round"/><path d="M0,18.4 h19" stroke="#7f9fe0" stroke-width="1.1"/></svg>
<span class="t" style="left:83.7px;top:414px;font-size:17.4px;line-height:20px;color:#9b9b9b;font-style:italic;transform:scaleX(0.9513);">Plate Sketch</span>
<svg class="b" style="left:56.6px;top:446.5px;" width="20" height="20" viewBox="0 0 20 20"><g fill="none" stroke="#777" stroke-width="1.1" stroke-linejoin="round"><path d="M0.7,0.7 h15.4 l3.2,3 v15.6 h-15.4 l-3.2,-3z"/><path d="M0.7,0.7 l3.2,3 h15.4 M3.9,3.7 v15.6"/></g><path d="M7.2,7.6 h9 l3,2.8 v8.8 h-9 l-3,-2.8z" fill="#bdbdbd" stroke="#888" stroke-width="1" stroke-linejoin="round"/></svg>
<span class="t" style="left:83.7px;top:447px;font-size:17.4px;line-height:20px;color:#9b9b9b;font-style:italic;transform:scaleX(0.9567);">Plate Extrude</span>
<svg class="b" style="left:55.2px;top:485.4px;" width="15" height="8.8" viewBox="0 0 15 8.8"><path d="M1,1 L7.5,7.4 L14,1" fill="none" stroke="#505050" stroke-width="2.8"/></svg>
<svg class="b" style="left:82px;top:481.2px;" width="19" height="15" viewBox="0 0 19 15"><path d="M0.8,13.8 V1.4 a0.6,0.6 0 0 1 0.6,-0.6 h5.6 l1.6,2.2 h9 a0.6,0.6 0 0 1 0.6,0.6 v10.2 a0.6,0.6 0 0 1 -0.6,0.6 h-16.2z" fill="#fff" stroke="#444" stroke-width="1.2"/></svg>
<span class="t" style="left:107.1px;top:479px;font-size:17.4px;line-height:20px;color:#444;transform:scaleX(0.9616);">Belts (3)</span>
<div class="b" style="left:61.5px;top:506.4px;width:1.2px;height:96.4px;background:#cfcfcf;"></div>
<div class="b" style="left:56px;top:602px;width:11.8px;height:1.2px;background:#cfcfcf;"></div>
<svg class="b" style="left:80px;top:511.09999999999997px;" width="21" height="21" viewBox="0 0 21 21"><path d="M10.6,1 a4.4,4.4 0 0 1 4.2,3 l4.6,8.8 a4,4 0 0 1 -2,5.6 l-9.4,2 a5.2,5.2 0 0 1 -6.6,-6.8 l4.8,-9 a4.6,4.6 0 0 1 4.4,-3.6z" fill="#d4d4d4" stroke="#aaa" stroke-width="1.2"/><circle cx="10.8" cy="5.6" r="3" fill="#c4c4c4" stroke="#aaa" stroke-width="0.9"/><circle cx="5.8" cy="15" r="3.8" fill="#c4c4c4" stroke="#aaa" stroke-width="0.9"/><path d="M11.4,10.4 l4.4,-1 l1.6,3.6 l-3.4,2.6 l-3.2,-1.6z" fill="#fff" stroke="#aaa" stroke-width="0.8"/></svg>
<span class="t" style="left:107.6px;top:512px;font-size:17.4px;line-height:20px;color:#9b9b9b;font-style:italic;">?</span>
<svg class="b" style="left:246.4px;top:509.79999999999995px;" width="8" height="23" viewBox="0 0 8 23"><path d="M4,0.2 v22.6" stroke="#333" stroke-width="2.3" stroke-dasharray="2.3 1.75"/><circle cx="4" cy="11.5" r="3.8" fill="#333"/></svg>
<svg class="b" style="left:80px;top:543.5999999999999px;" width="21" height="21" viewBox="0 0 21 21"><path d="M10.6,1 a4.4,4.4 0 0 1 4.2,3 l4.6,8.8 a4,4 0 0 1 -2,5.6 l-9.4,2 a5.2,5.2 0 0 1 -6.6,-6.8 l4.8,-9 a4.6,4.6 0 0 1 4.4,-3.6z" fill="#d4d4d4" stroke="#aaa" stroke-width="1.2"/><circle cx="10.8" cy="5.6" r="3" fill="#c4c4c4" stroke="#aaa" stroke-width="0.9"/><circle cx="5.8" cy="15" r="3.8" fill="#c4c4c4" stroke="#aaa" stroke-width="0.9"/><path d="M11.4,10.4 l4.4,-1 l1.6,3.6 l-3.4,2.6 l-3.2,-1.6z" fill="#fff" stroke="#aaa" stroke-width="0.8"/></svg>
<span class="t" style="left:107.6px;top:544px;font-size:17.4px;line-height:20px;color:#9b9b9b;font-style:italic;">?</span>
<svg class="b" style="left:246.4px;top:542.3px;" width="8" height="23" viewBox="0 0 8 23"><path d="M4,0.2 v22.6" stroke="#333" stroke-width="2.3" stroke-dasharray="2.3 1.75"/><circle cx="4" cy="11.5" r="3.8" fill="#333"/></svg>
<svg class="b" style="left:80px;top:576.0999999999999px;" width="21" height="21" viewBox="0 0 21 21"><path d="M10.6,1 a4.4,4.4 0 0 1 4.2,3 l4.6,8.8 a4,4 0 0 1 -2,5.6 l-9.4,2 a5.2,5.2 0 0 1 -6.6,-6.8 l4.8,-9 a4.6,4.6 0 0 1 4.4,-3.6z" fill="#d4d4d4" stroke="#aaa" stroke-width="1.2"/><circle cx="10.8" cy="5.6" r="3" fill="#c4c4c4" stroke="#aaa" stroke-width="0.9"/><circle cx="5.8" cy="15" r="3.8" fill="#c4c4c4" stroke="#aaa" stroke-width="0.9"/><path d="M11.4,10.4 l4.4,-1 l1.6,3.6 l-3.4,2.6 l-3.2,-1.6z" fill="#fff" stroke="#aaa" stroke-width="0.8"/></svg>
<span class="t" style="left:107.6px;top:577px;font-size:17.4px;line-height:20px;color:#9b9b9b;font-style:italic;">?</span>
<svg class="b" style="left:246.4px;top:574.8px;" width="8" height="23" viewBox="0 0 8 23"><path d="M4,0.2 v22.6" stroke="#333" stroke-width="2.3" stroke-dasharray="2.3 1.75"/><circle cx="4" cy="11.5" r="3.8" fill="#333"/></svg>
<div class="b" style="left:56px;top:610.4px;width:20.6px;height:18px;border:1px solid #c8c8c8;border-radius:2px;background:#fff;"></div>
<span class="t" style="left:57.6px;top:613px;font-size:13.6px;line-height:15px;color:#aaa;transform:scaleX(0.9018);">Am</span>
<span class="t" style="left:83.7px;top:609px;font-size:17.4px;line-height:20px;color:#9b9b9b;font-style:italic;transform:scaleX(0.9618);">Plate Asm. Mirror</span>
<svg class="b" style="left:246.4px;top:607.3px;" width="8" height="23" viewBox="0 0 8 23"><path d="M4,0.2 v22.6" stroke="#333" stroke-width="2.3" stroke-dasharray="2.3 1.75"/><circle cx="4" cy="11.5" r="3.8" fill="#333"/></svg>
<div class="b" style="left:56px;top:648px;width:238px;height:7.6px;background:#ababab;"></div>
<div class="b" style="left:50.2px;top:850px;width:249.6px;height:1.2px;background:#cfcfcf;"></div>
<svg class="b" style="left:55.2px;top:863.2px;" width="15" height="8.8" viewBox="0 0 15 8.8"><path d="M1,1 L7.5,7.4 L14,1" fill="none" stroke="#505050" stroke-width="2.8"/></svg>
<span class="t" style="left:78.3px;top:858px;font-size:17.4px;line-height:20px;color:#444;transform:scaleX(0.9392);">Parts (1)</span>
<svg class="b" style="left:80.5px;top:888.8px;" width="20" height="19.4" viewBox="0 0 20 19.4"><path d="M9.25,0.6 H15.5 L19.1,4.3 V18.6 H4.9 L0.9,15 V8.9 H9.25z" fill="#fff" stroke="#555" stroke-width="1.3" stroke-linejoin="round"/><path d="M9.25,0.6 L13.8,4.7 H19.1 M13.8,4.7 V13.4 H4.9 L0.9,8.9 M4.9,13.4 V18.6 M9.25,8.9 L13.8,13.4" fill="none" stroke="#666" stroke-width="1.1" stroke-linejoin="round"/></svg>
<span class="t" style="left:106.5px;top:889px;font-size:17.4px;line-height:20px;color:#444;transform:scaleX(0.9204);">Origin Cube</span>
<div class="b" style="left:306.1px;top:644px;width:41.9px;height:43px;background:#fff;border:1px solid #a0a0a0;border-left:none;"></div>
<svg class="b" style="left:300px;top:640px;" width="60" height="50" viewBox="0 0 60 50"><path d="M15.2,16.8 L19,20.2 L22.8,16.8" fill="none" stroke="#222" stroke-width="1.5"/><path d="M18.9,22.7 V38.6" stroke="#666" stroke-width="1.6"/><path d="M25.1,18 H37.9" stroke="#6a6a6a" stroke-width="1.5"/><path d="M21.6,24.4 H37.9 M21.6,30.6 H37.9" stroke="#333" stroke-width="1.3"/><path d="M21.6,36.8 H37.9" stroke="#555" stroke-width="1.6"/></svg>
<div class="b" style="left:320.2px;top:100px;width:274.8px;height:274px;background:#fff;box-shadow:0 3px 8px rgba(0,0,0,0.26),0 0 2px rgba(0,0,0,0.10);"></div>
<div class="b" style="left:320.2px;top:134.8px;width:274.8px;height:1.2px;background:#d0d0d0;"></div>
<span class="t" style="left:327.3px;top:110px;font-size:15.6px;line-height:17px;color:#2a2a2a;font-weight:700;transform:scaleX(0.9859);">Layout Sketch</span>
<div class="b" style="left:525px;top:100px;width:35px;height:35px;background:#009100;"></div>
<svg class="b" style="left:531.5px;top:108.5px;" width="22" height="18" viewBox="0 0 22 18"><path d="M2.4,9.2 L8.2,14.8 L19.4,2.8" fill="none" stroke="#fff" stroke-width="4"/></svg>
<svg class="b" style="left:570px;top:111.2px;" width="15" height="14.6" viewBox="0 0 15 14.6"><path d="M1.4,1.4 L13.6,13.2 M13.6,1.4 L1.4,13.2" stroke="#c4262e" stroke-width="3.4"/></svg>
<div class="b" style="left:324.3px;top:142px;width:234.5px;height:53.6px;border:1px solid #cfcfcf;border-radius:3px;background:#fff;"></div>
<span class="t" style="left:331.2px;top:150px;font-size:13.6px;line-height:15px;color:#555;transform:scaleX(0.9317);">Sketch plane</span>
<span class="t" style="left:331.7px;top:170px;font-size:16.6px;line-height:19px;color:#444;">Right plane</span>
<svg class="b" style="left:534.6px;top:176.8px;" width="9.2" height="9" viewBox="0 0 9.2 9"><path d="M0.6,0.6 L8.6,8.4 M8.6,0.6 L0.6,8.4" stroke="#444" stroke-width="1.3"/></svg>
<svg class="b" style="left:564.6px;top:146.6px;" width="22" height="22" viewBox="0 0 22 22"><circle cx="11" cy="11" r="10.2" fill="none" stroke="#333" stroke-width="1.2"/><path d="M11,11.4 V3.4 A7.8,7.8 0 0 1 18.6,11.4z" fill="#e6e6e6"/><circle cx="11" cy="11" r="7.6" fill="none" stroke="#333" stroke-width="1.4"/><path d="M11,3.6 V11.4 H18.4" fill="none" stroke="#444" stroke-width="1.5"/></svg>
<div class="b" style="left:325px;top:213.3px;width:15px;height:15px;background:#fff;border:1.2px solid #777;border-radius:3.5px;"></div>
<span class="t" style="left:344.4px;top:211px;font-size:16.8px;line-height:19px;color:#444;transform:scaleX(1.0096);">Disable imprinting</span>
<div class="b" style="left:325px;top:247.5px;width:15px;height:15px;background:#fff;border:1.2px solid #777;border-radius:3.5px;"></div>
<span class="t" style="left:345.0px;top:245px;font-size:16.8px;line-height:19px;color:#444;transform:scaleX(0.9938);">Show constraints</span>
<div class="b" style="left:325px;top:281.4px;width:15px;height:15px;background:#174eb0;border-radius:3.5px;"></div>
<svg class="b" style="left:325px;top:281.4px;" width="15" height="15" viewBox="0 0 15 15"><path d="M3.4,7.6 L6.4,10.6 L11.8,4.4" fill="none" stroke="#fff" stroke-width="2.2"/></svg>
<span class="t" style="left:345.1px;top:279px;font-size:16.8px;line-height:19px;color:#444;transform:scaleX(0.9697);">Show expressions</span>
<div class="b" style="left:325px;top:315.4px;width:15px;height:15px;background:#174eb0;border-radius:3.5px;"></div>
<svg class="b" style="left:325px;top:315.4px;" width="15" height="15" viewBox="0 0 15 15"><path d="M3.4,7.6 L6.4,10.6 L11.8,4.4" fill="none" stroke="#fff" stroke-width="2.2"/></svg>
<span class="t" style="left:345.1px;top:313px;font-size:16.8px;line-height:19px;color:#444;transform:scaleX(0.9779);">Show overdefined</span>
<div class="b" style="left:501.3px;top:343.4px;width:61.4px;height:26.6px;border:1px solid #9a9a9a;border-radius:3.5px;background:#fff;"></div>
<span class="t" style="left:514.9px;top:347px;font-size:16.4px;line-height:18px;color:#2a2a2a;transform:scaleX(0.9629);">Final</span>
<svg class="b" style="left:574px;top:353px;" width="15.4" height="15.4" viewBox="0 0 15.4 15.4"><circle cx="7.7" cy="7.7" r="7.6" fill="#ababab"/></svg>
<span class="t" style="left:577.8px;top:354px;font-size:12.5px;line-height:14px;color:#fff;font-weight:700;">?</span>
<div class="b" style="left:1163.5px;top:514.6px;width:1232.5px;height:742px;border-left:1.3px solid #a9d6f1;border-top:1.3px solid #a9d6f1;"></div>
<span class="t" style="left:1171.6px;top:520px;font-size:23.8px;line-height:27px;color:#8fcdee;transform:scaleX(1.0528);-webkit-text-stroke:0.35px #8fcdee;">Layout Sketch</span>
<svg class="b" style="left:0px;top:0px;" width="2398" height="1294" viewBox="0 0 2398 1294"><circle cx="1885.8" cy="562.6" r="57.3" fill="#e1e3e6"/><rect x="1579" y="614" width="615" height="614.2" fill="rgba(96,150,205,0.07)" stroke="#9ab3dd" stroke-width="2.1"/><rect x="1783.4" y="818.6" width="205.4" height="205.4" rx="1.5" fill="#bbbcbe"/><circle cx="1885.8" cy="460.20000000000005" r="10.4" fill="#e4e6e9"/><circle cx="1783.3999999999999" cy="562.6" r="10.4" fill="#e4e6e9"/><circle cx="1988.2" cy="562.6" r="10.4" fill="#e4e6e9"/><circle cx="1885.8" cy="665.0" r="10.4" fill="#e4e6e9"/><path d="M1886,614 V1228 M1579,921.2 H2194" stroke="#80a2d5" stroke-width="2.1" fill="none"/><rect x="1783.4" y="818.6" width="205.4" height="205.4" rx="1.5" fill="none" stroke="#222" stroke-width="2.2"/><circle cx="1885.8" cy="562.6" r="57.3" fill="none" stroke="#1a1a1a" stroke-width="2.5"/><circle cx="1885.8" cy="460.20000000000005" r="10.4" fill="none" stroke="#1a1a1a" stroke-width="2.5"/><circle cx="1885.8" cy="460.20000000000005" r="3.2" fill="#111"/><circle cx="1783.3999999999999" cy="562.6" r="10.4" fill="none" stroke="#1a1a1a" stroke-width="2.5"/><circle cx="1783.3999999999999" cy="562.6" r="3.2" fill="#111"/><circle cx="1988.2" cy="562.6" r="10.4" fill="none" stroke="#1a1a1a" stroke-width="2.5"/><circle cx="1988.2" cy="562.6" r="3.2" fill="#111"/><circle cx="1885.8" cy="665.0" r="10.4" fill="none" stroke="#1a1a1a" stroke-width="2.5"/><circle cx="1885.8" cy="665.0" r="3.2" fill="#111"/><circle cx="1885.8" cy="562.6" r="102.4" fill="none" stroke="#1a1a1a" stroke-width="2.5" stroke-dasharray="36.8 8.2 4.4 8.2" stroke-dashoffset="38.8"/><circle cx="1885.8" cy="562.6" r="3.7" fill="#111"/><path d="M1895,562.6 H2023.2 M1895,921.2 H2023" stroke="#2a2a2a" stroke-width="1.6"/><path d="M2018.2,570.6 V858 M2018.2,893 V912" stroke="#1a1a1a" stroke-width="1.3"/><path d="M2018.2,562.6 l-4.6,19 h9.2z M2018.2,921 l-4.6,-19.4 h9.2z" fill="#111"/><circle cx="1886" cy="921.2" r="5.2" fill="#fff" stroke="#111" stroke-width="1.7"/><circle cx="1886" cy="921.2" r="1.6" fill="#111"/><path d="M1879.3,399.7 L1883.6,440.8" stroke="#1a1a1a" stroke-width="1.3"/><path d="M1885.7,460.2 L1878.6,441.3 L1888.7,440.3z" fill="#111"/><path d="M1980.0,403.6 L1903.0,449.2" stroke="#1a1a1a" stroke-width="1.3"/><path d="M1895.3,453.8 L1901.6,446.7 L1904.5,451.7z" fill="#111"/><path d="M2039.3,464.5 L1989.1,496.6" stroke="#1a1a1a" stroke-width="1.3"/><path d="M1972.2,507.4 L1986.4,492.4 L1991.7,500.8z" fill="#111"/><path d="M1950.0,690.0 L1921.5,632.5" stroke="#1a1a1a" stroke-width="1.3"/><path d="M1912.9,615.0 L1926.2,630.2 L1916.9,634.8z" fill="#111"/></svg>
<span class="t" style="left:1580.6px;top:613px;font-size:24.2px;line-height:27px;color:#3560bd;transform:scaleX(1.0381);-webkit-text-stroke:0.25px #3560bd;">Right</span>
<div class="b" style="left:1921px;top:338px;width:176.8px;height:29.2px;background:#ddeef9;border-radius:4px;"></div>
<div class="b" style="left:1862px;top:368.7px;width:34px;height:29.3px;background:#fbfbfb;border-radius:2px;"></div>
<div class="b" style="left:1943px;top:371px;width:106px;height:30px;background:#fbfbfb;border-radius:2px;"></div>
<div class="b" style="left:2041px;top:436px;width:39px;height:30px;background:#fbfbfb;border-radius:2px;"></div>
<div class="b" style="left:1920px;top:694px;width:79px;height:30px;background:#fbfbfb;border-radius:2px;"></div>
<span class="t" style="left:1927.3px;top:342px;font-size:18.8px;line-height:21px;color:#555;transform:scaleX(0.9133);">#ClearanceFit_10_32</span>
<span class="t" style="left:1868.4px;top:371px;font-size:20.6px;line-height:23px;color:#666;transform:scaleX(1.0466);">4x</span>
<span class="t" style="left:1949.0px;top:375px;font-size:18.5px;line-height:21px;color:#9a9a9a;font-weight:700;font-style:italic;transform:scaleX(1.1345);font-family:'Liberation Serif',serif;">fx</span>
<span class="t" style="left:1973.6px;top:375px;font-size:21.4px;line-height:24px;color:#555;transform:scaleX(1.0047);">Ø0.201</span>
<span class="t" style="left:2046.7px;top:440px;font-size:21.4px;line-height:24px;color:#555;transform:scaleX(0.9720);">Ø2</span>
<span class="t" style="left:1925.7px;top:698px;font-size:21.4px;line-height:24px;color:#555;transform:scaleX(0.9594);">Ø1.125</span>
<div class="b" style="left:1997.5px;top:858.3px;width:42.2px;height:34.2px;background:#f1f4f7;border-radius:2px;"></div>
<span class="t" style="left:2002.5px;top:863px;font-size:22.4px;line-height:25px;color:#666;transform:scaleX(0.9781);">3.5</span>
<svg class="b" style="left:0px;top:0px;" width="2398" height="400" viewBox="0 0 2398 400"><path d="M2285.2,115.6 l9.2,11.2 h-18.4z M2285.2,301.8 l9.2,-11.6 h-18.4z M2192.2,208.6 l12,-9.2 v18.4z M2379.2,208.6 l-12,-9.2 v18.4z" fill="#e3e9f0"/><path d="M2260.6,129.6 Q2240,137 2226,152" fill="none" stroke="#e3e9f0" stroke-width="6.4"/><path d="M2218.4,157 l4.2,-13.6 l9.6,10.8z" fill="#e3e9f0"/><path d="M2310.2,129.6 Q2330.8,137 2344.8,152" fill="none" stroke="#e3e9f0" stroke-width="6.4"/><path d="M2352.4,157 l-4.2,-13.6 l-9.6,10.8z" fill="#e3e9f0"/><rect x="2251.8" y="173" width="69.2" height="72" fill="#e3e9f0"/><circle cx="2251.8" cy="173" r="11.6" fill="#fff"/><circle cx="2321" cy="173" r="11.6" fill="#fff"/><circle cx="2251.8" cy="245" r="11.6" fill="#fff"/><circle cx="2321" cy="245" r="11.6" fill="#fff"/><rect x="2258" y="181" width="55" height="55.6" rx="11" fill="#fff"/><path d="M2247.4,173.5 V246.8" stroke="#2a2ae6" stroke-width="2"/><path d="M2246.4,246.8 H2320.8" stroke="#37a837" stroke-width="2"/></svg>
<span class="t" style="left:2267.6px;top:197px;font-size:17.2px;line-height:20px;color:#333;transform:scaleX(0.8727);">Right</span>
<span class="t" style="left:2242.9px;top:150px;font-size:18.6px;line-height:21px;color:#3a3ae0;font-weight:700;transform:scaleX(0.7653);">Z</span>
<span class="t" style="left:2328.7px;top:236px;font-size:17.4px;line-height:20px;color:#37a837;font-weight:700;transform:scaleX(0.8028);">Y</span>
<svg class="b" style="left:2329px;top:280px;" width="23.4" height="23" viewBox="0 0 23.4 23"><path d="M11.7,0.8 L22.4,4.6 V17 L11.7,22.2 L1,17 V4.6z" fill="#fff" stroke="#333" stroke-width="1.2" stroke-linejoin="round"/><path d="M1,4.6 L11.7,9 V22.2 L1,17z" fill="#8e8e8e" stroke="#333" stroke-width="1"/><path d="M11.7,9 L22.4,4.6 V17 L11.7,22.2z" fill="#d2d2d2" stroke="#333" stroke-width="1"/></svg>
<svg class="b" style="left:2363.3px;top:288.8px;" width="9.8" height="5.2" viewBox="0 0 9.8 5.2"><path d="M0,0 h9.8 l-4.9,5.2z" fill="#333"/></svg>
<div class="b" style="left:2358.4px;top:534.4px;width:38px;height:166px;border:1px solid #a6a6a6;border-right:none;background:#fff;"></div>
<div class="b" style="left:2358.4px;top:576px;width:38px;height:1px;background:#a6a6a6;"></div>
<div class="b" style="left:2358.4px;top:617.3px;width:38px;height:1px;background:#a6a6a6;"></div>
<div class="b" style="left:2358.4px;top:658.7px;width:38px;height:1px;background:#a6a6a6;"></div>
<div class="b" style="left:2358.4px;top:713.8px;width:38px;height:82.2px;border:1px solid #a6a6a6;border-right:none;background:#fff;"></div>
<div class="b" style="left:2358.4px;top:754.6px;width:38px;height:1px;background:#a6a6a6;"></div>
<svg class="b" style="left:2366px;top:544px;" width="26" height="26" viewBox="0 0 26 26"><path d="M3.5,16.6 L12.5,0.8 L18.1,3.6 L11.8,16.6z" fill="#6e6e6e"/><path d="M9.7,16.6 L19.5,7 L24.2,11.7 L18.8,16.6z" fill="#a2a2a2"/><path d="M7.4,16.6 L15.4,8.6 L20,12.6 L15.6,16.6z" fill="#d4d4d4"/><rect x="0.9" y="17.3" width="24" height="7.5" rx="1.8" fill="#fff" stroke="#555" stroke-width="1.1"/><path d="M17.4,17.6 h6 a1.4,1.4 0 0 1 1.4,1.4 v4.2 a1.4,1.4 0 0 1 -1.4,1.4 h-6z" fill="#d4d4d4"/><path d="M9.7,17.3 v7.5 M17.4,17.3 v7.5" stroke="#555" stroke-width="0.9"/><circle cx="5" cy="21" r="1.3" fill="none" stroke="#555" stroke-width="0.9"/></svg>
<svg class="b" style="left:2366px;top:586px;" width="25" height="25" viewBox="0 0 25 25"><rect x="0" y="0" width="12" height="9.6" fill="#2a62c9"/><path d="M4,0 v9.6 M8,0 v9.6 M0,3.2 h12 M0,6.4 h12" stroke="#fff" stroke-width="0.9"/><path d="M14.4,5 L23.6,9 V18.6 L14.4,23.4 L5.6,18.6 V10.4" fill="none" stroke="#333" stroke-width="1.3" stroke-linejoin="round"/><path d="M5.6,10.4 L14.4,13.4 L23.6,9 M14.4,13.4 V23.4" fill="none" stroke="#333" stroke-width="1.3"/></svg>
<svg class="b" style="left:2366px;top:627px;" width="25" height="25" viewBox="0 0 25 25"><rect x="0" y="0" width="12" height="9.6" fill="#444"/><path d="M4,0 v9.6 M8,0 v9.6 M0,3.2 h12 M0,6.4 h12" stroke="#fff" stroke-width="0.9"/><path d="M4,11 c-2,0 -2,1.5 -2,3 c0,2 -1.4,2.4 -1.4,2.4 c0,0 1.4,0.4 1.4,2.4 c0,1.6 0,3 2,3 M20.6,2.6 c2,0 2,1.6 2,3.4 v4 c0,2 1.6,2.6 1.6,2.6 c0,0 -1.6,0.6 -1.6,2.6 v3.6 c0,1.8 0,3.4 -2,3.4" fill="none" stroke="#333" stroke-width="1.3"/><path d="M13.4,8.6 L19.6,11 V16.8 L13.4,20 L7.4,16.8 V11.6z M7.4,11.4 L13.4,13.8 L19.6,11 M13.4,13.8 V20" fill="none" stroke="#333" stroke-width="1.2" stroke-linejoin="round"/></svg>
<svg class="b" style="left:2366px;top:668px;" width="25" height="25" viewBox="0 0 25 25"><rect x="2.4" y="0" width="12" height="9.6" fill="#444"/><path d="M6.4,0 v9.6 M10.4,0 v9.6 M2.4,3.2 h12 M2.4,6.4 h12" stroke="#fff" stroke-width="0.9"/><path d="M4.6,3 C0,8 0,18 4.6,23.6 M20.6,3 C25.4,8 25.4,18 20.6,23.6" fill="none" stroke="#222" stroke-width="1.9"/></svg>
<span class="t" style="left:2373.0px;top:672px;font-size:20px;line-height:22px;color:#222;font-weight:700;font-style:italic;transform:scaleX(1.4082);font-family:'Liberation Serif',serif;">x</span>
<div class="b" style="left:2364px;top:720.4px;width:29px;height:29px;background:#d9d9d9;border-radius:4px;"></div>
<svg class="b" style="left:2366.5px;top:722.8px;" width="24" height="24" viewBox="0 0 24 24"><path d="M12,12 L3.5,3.5 A12,12 0 0 1 20.5,3.5z" fill="#6abf4b"/><path d="M12,12 L20.5,3.5 A12,12 0 0 1 20.5,20.5z" fill="#4bb5e8"/><path d="M12,12 L20.5,20.5 A12,12 0 0 1 3.5,20.5z" fill="#f0b340"/><path d="M12,12 L3.5,20.5 A12,12 0 0 1 3.5,3.5z" fill="#d9483b"/></svg>
<div class="b" style="left:2364px;top:761px;width:29px;height:29px;background:#d9d9d9;border-radius:4px;"></div>
<div class="b" style="left:2366px;top:763.4px;width:25px;height:24px;background:#0b55e0;border:1.4px solid #111;"></div>
<span class="t" style="left:2367.8px;top:765px;font-size:20.4px;line-height:22px;color:#fff;font-weight:700;transform:scaleX(0.6171);font-family:'Liberation Serif',serif;">MK</span>
<svg class="b" style="left:2275px;top:1230.6px;" width="21.4" height="15.6" viewBox="0 0 21.4 15.6"><ellipse cx="13.4" cy="5" rx="6.6" ry="4.2" fill="#fff" stroke="#222" stroke-width="1.4"/><ellipse cx="13.4" cy="5" rx="3" ry="1.5" fill="none" stroke="#222" stroke-width="1.2"/><path d="M20,5 V11 c0,2 -2,3.6 -4.6,3.6 H0.8 V8.6 H14 c3,0 5.6,-1.4 6,-3.6" fill="#fff" stroke="#222" stroke-width="1.4" stroke-linejoin="round"/><path d="M3,14 v-2.6 M5.6,14 v-2 M8.2,14 v-2.6 M10.8,14 v-2 M13.4,14 v-2.6 M16,13.6 v-2" stroke="#222" stroke-width="0.9"/></svg>
<svg class="b" style="left:2316px;top:1231px;" width="25.4" height="16.4" viewBox="0 0 25.4 16.4"><path d="M0.8,15.4 V13 a11.9,11.9 0 0 1 23.8,0 V15.4z" fill="#fff" stroke="#222" stroke-width="1.5" stroke-linejoin="round"/><path d="M5.6,12.4 a7.1,7.1 0 0 1 14.2,0 h-4.6 a2.5,2.5 0 0 0 -5,0z" fill="#fff" stroke="#222" stroke-width="1.3" stroke-linejoin="round"/><path d="M12.7,1.4 v2 M3,11 l1.8,0.4 M22.4,11 l-1.8,0.4 M5,5.6 l1.4,1.2 M20.4,5.6 l-1.4,1.2 M8.4,2.8 l0.8,1.6 M17,2.8 l-0.8,1.6" stroke="#222" stroke-width="0.8"/></svg>
<svg class="b" style="left:2363.6px;top:1229.6px;" width="18" height="17.6" viewBox="0 0 18 17.6"><path d="M9,0.6 V15 M2.6,1 H15.4 M0.6,16.4 H17.4" stroke="#222" stroke-width="1.7" fill="none"/><path d="M3,1.6 L0.8,11.6 H5.6z M15,1.6 L12.4,11.6 H17.2z" fill="none" stroke="#222" stroke-width="1"/><path d="M0.4,11.4 h5.6 v1.6 h-5.6z M12,11.4 h5.6 v1.6 h-5.6z" fill="#222"/></svg>
<div class="b" style="left:50px;top:1256px;width:2346px;height:1px;background:#cdcdcd;"></div>
<svg class="b" style="left:61.2px;top:1266px;" width="19" height="18.6" viewBox="0 0 19 18.6"><path d="M9.5,0 v18.6 M0,9.3 h19" stroke="#666" stroke-width="3.4"/></svg>
<svg class="b" style="left:134px;top:1257px;" width="173" height="33" viewBox="0 0 173 33"><path d="M0,0 H162.6 L172,16.5 L162.6,33 H0z" fill="#fff"/></svg>
<svg class="b" style="left:92.6px;top:1257px;" width="54" height="33" viewBox="0 0 54 33"><path d="M0,0 H42.6 L53,16.5 L42.6,33 H0z" fill="#ebebeb"/><path d="M42.6,0 L53,16.5 L42.6,33" fill="none" stroke="#d2d2d2" stroke-width="1.2"/><path d="M0.5,0 V33" stroke="#c8c8c8" stroke-width="1"/></svg>
<svg class="b" style="left:103.7px;top:1260.3px;" width="23.4" height="22.6" viewBox="0 0 23.4 22.6"><path d="M11.6,0.2 L23.2,11.4 V22.4 H14.4 V14.6 H9.2 V22.4 H0.2 V11.4z" fill="#666"/><path d="M17,1.4 h3.4 v7.6 l-3.4,-3.2z" fill="#666"/></svg>
<span class="t" style="left:162.1px;top:1263px;font-size:17.4px;line-height:20px;color:#6a6a6a;transform:scaleX(0.9576);">Exercise 2: Dea</span>
<div class="b" style="left:308.6px;top:1257px;width:250.6px;height:33.2px;background:#e9e9e9;border-radius:0 0 6px 6px;box-shadow:0 1px 1.5px rgba(0,0,0,0.22);"></div>
<svg class="b" style="left:321.9px;top:1261.3px;" width="23" height="22.6" viewBox="0 0 23 22.6"><path d="M0.8,0.8 H16.2 L22.2,6.2 V22 H6 L0.8,16.6z" fill="#fff" stroke="#444" stroke-width="1.3" stroke-linejoin="round"/><path d="M1.4,1.4 H15.6 V14.8 H5.8 L1.4,11z" fill="#8c8c8c"/><path d="M5.8,5.8 H15.6 V14.8 H5.8z" fill="#9c9c9c" stroke="#555" stroke-width="0.9"/><path d="M0.8,0.8 L6,6.2 H22.2 M6,6.2 V22" fill="none" stroke="#444" stroke-width="1.2"/></svg>
<span class="t" style="left:349.1px;top:1264px;font-size:17.4px;line-height:20px;color:#555;">Exercise 2 Assembly</span>
<div class="b" style="left:560.8px;top:1257px;width:250px;height:35px;background:#fbfbfb;border-radius:0 0 4px 4px;"></div>
<div class="b" style="left:560.8px;top:1289px;width:250px;height:3.2px;background:#174eb0;border-radius:0 0 4px 4px;"></div>
<svg class="b" style="left:576.4px;top:1261.2px;" width="21.6" height="22.4" viewBox="0 0 21.6 22.4"><g fill="#fff" stroke="#444" stroke-width="1.3" stroke-linejoin="round"><path d="M0.8,8.4 l2.8,-2.4 h5.8 v13.6 l-2.4,2 h-6.2z"/><path d="M0.8,8.4 h6.2 v13.2 M7,8.4 l2.4,-2.4"/><path d="M11.2,3.2 l2.8,-2.4 h6.6 v18.4 l-2.6,2.4 h-6.8z"/><path d="M11.2,3.2 h6.8 v18.4 M18,3.2 l2.6,-2.4"/></g></svg>
<span class="t" style="left:602.0px;top:1264px;font-size:17.4px;line-height:20px;color:#333;transform:scaleX(0.9877);">Exercise 2 Part Studio</span>
</body></html>
